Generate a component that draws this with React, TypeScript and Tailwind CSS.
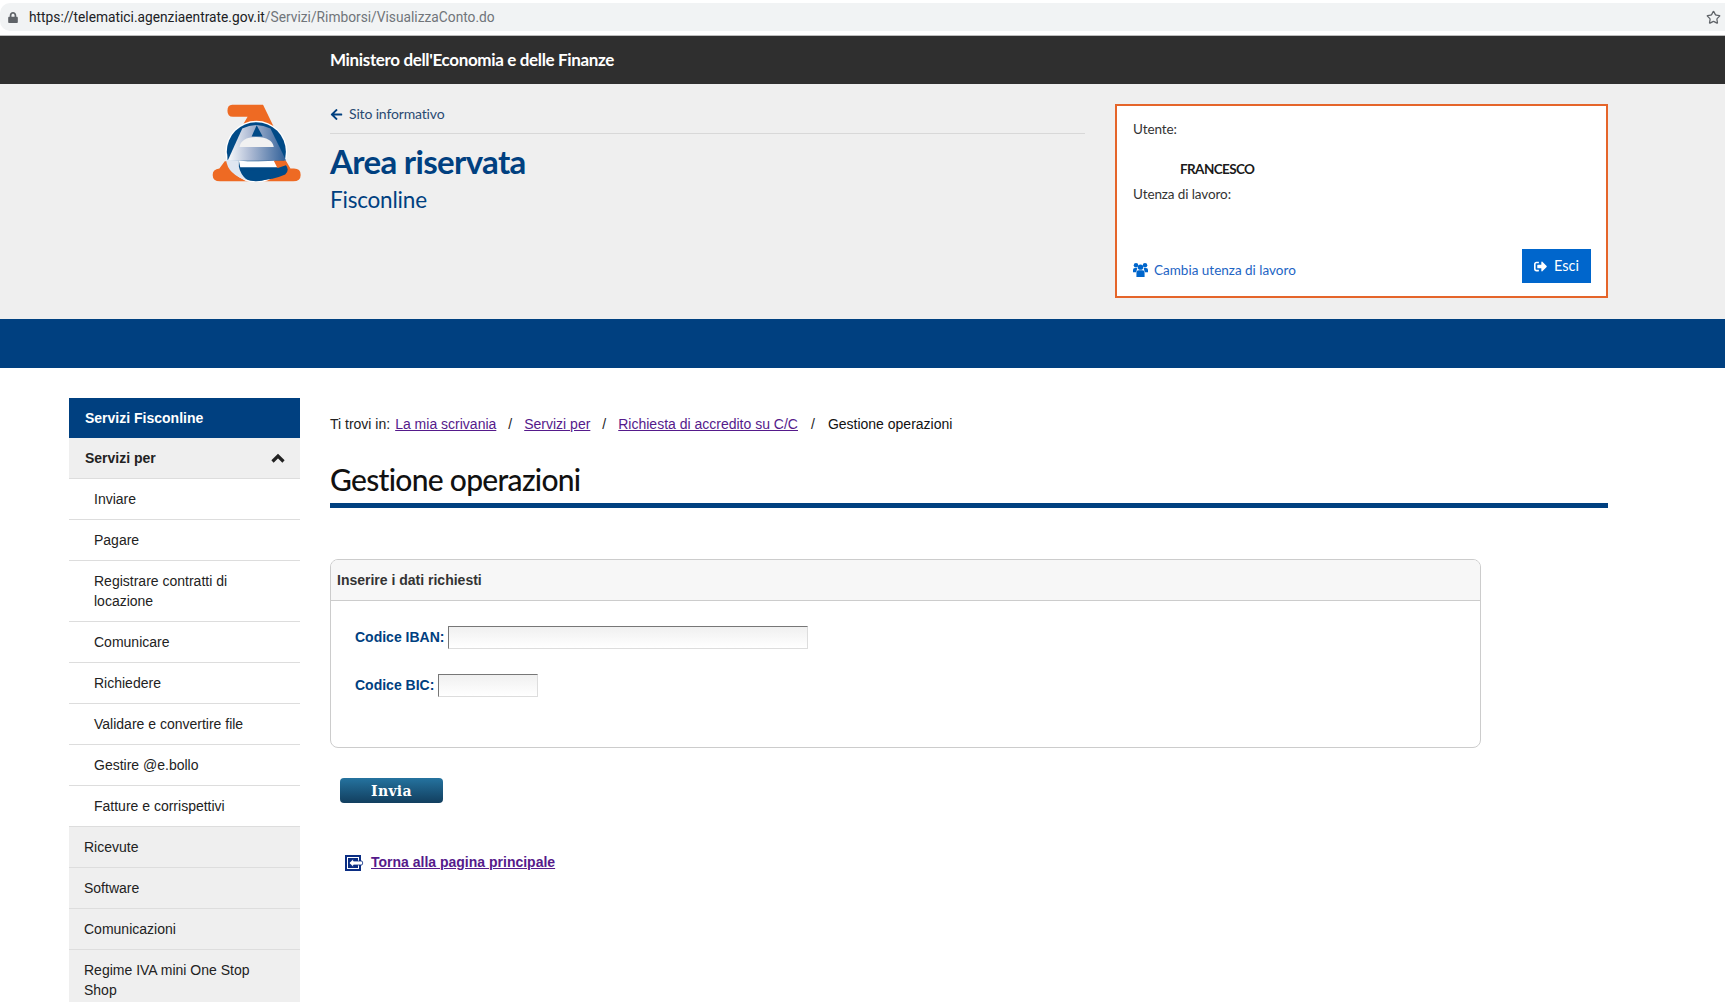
import React from 'react';
import { FaArrowLeft, FaLock, FaSignOutAlt } from 'react-icons/fa';
import { Star } from 'lucide-react';

const subItems = [
  'Inviare',
  'Pagare',
  'Registrare contratti di locazione',
  'Comunicare',
  'Richiedere',
  'Validare e convertire file',
  'Gestire @e.bollo',
  'Fatture e corrispettivi',
];

const mainItems = ['Ricevute', 'Software', 'Comunicazioni', 'Regime IVA mini One Stop Shop'];

const Logo = () => (
  <svg viewBox="66 40 268 232" className="w-[90px] h-[78px]">
    <defs>
      <linearGradient id="band" x1="0" x2="1" y1="0" y2="0">
        <stop offset="0" stopColor="#ffffff" />
        <stop offset="0.4" stopColor="#aebbd4" />
        <stop offset="1" stopColor="#2f5f98" />
      </linearGradient>
    </defs>
    <path d="M126 42H218L252 112H152L172 78H128Q112 78 112 60Q112 42 126 42Z" fill="#ee6a23" />
    <path d="M104 210L88 232Q68 234 68 251Q68 270 90 270H308Q330 270 330 251Q330 232 310 232H298L284 208Z" fill="#ee6a23" />
    <circle cx="198" cy="182" r="92" fill="#ffffff" />
    <circle cx="198" cy="182" r="88" fill="#004a87" />
    <path d="M156 113Q198 92 240 113L287 209H108Q112 175 156 113Z" fill="url(#band)" />
    <path d="M156 113L112 210Q108 150 156 113Z" fill="#004a87" />
    <path d="M199 103L217 137H184Z" fill="#004a87" />
    <path d="M148 168Q152 139 198 138Q245 139 250 168Z" fill="#f1f1f1" />
    <path d="M146 208Q160 212 252 209L262 228H150Z" fill="#ffffff" />
    <path d="M250 209H286L300 233H262Z" fill="#ee6a23" />
    <path d="M108 206Q112 250 172 268Q150 250 146 226L146 208Z" fill="#dfe6f1" />
    <path d="M172 236Q230 244 286 222Q298 236 284 250Q230 274 174 264Q184 250 172 236Z" fill="#004a87" />
  </svg>
);

const BackIcon = () => (
  <svg viewBox="0 0 19 16" className="w-[19px] h-[16px]">
    <rect x="1" y="1" width="14" height="14" fill="#ffffff" stroke="#0b2e84" strokeWidth="2" />
    <rect x="3" y="3" width="10" height="10" fill="#0b2e84" />
    <path d="M4 8L8.5 3.8V6H17Q18.5 8 17 10H8.5V12.2Z" fill="#ffffff" stroke="#0b2e84" strokeWidth="0.8" />
  </svg>
);

const UsersIcon = () => (
  <svg viewBox="0 0 14 14" className="w-[15px] h-[15px]" fill="#0066cc">
    <circle cx="2.8" cy="3" r="2.1" />
    <circle cx="11.2" cy="3" r="2.1" />
    <path d="M0 9.5V7.2Q0 5.6 1.8 5.6H4L3 9.5Z" />
    <path d="M14 9.5V7.2Q14 5.6 12.2 5.6H10L11 9.5Z" />
    <circle cx="7" cy="4.8" r="2.5" />
    <path d="M3.2 14V10Q3.2 7.8 5.4 7.8H8.6Q10.8 7.8 10.8 10V14Z" />
  </svg>
);

const ChevronUp = () => (
  <svg viewBox="0 0 14 10" className="w-[14px] h-[10px]" fill="none" stroke="#222" strokeWidth="3.2">
    <path d="M1.5 8.5L7 3L12.5 8.5" />
  </svg>
);

const App = () => {
  return (
    <div className="w-[1725px] h-[1002px] overflow-hidden bg-white font-['Liberation_Sans',sans-serif]">
      {/* browser bar */}
      <div className="h-[36px] pt-[3px] border-b border-[#bdbdbd] bg-white">
        <div className="h-[28px] bg-[#f1f3f4] rounded-l-[10px] flex items-center pl-[8px] pr-[4px] font-['Roboto',sans-serif] text-[13.75px]">
          <FaLock className="w-[10px] h-[11px] text-[#5f6368]" />
          <span className="ml-[11px] text-[#202124]">https://telematici.agenziaentrate.gov.it</span>
          <span className="text-[#70757a]">/Servizi/Rimborsi/VisualizzaConto.do</span>
          <Star className="ml-auto w-[15px] h-[15px] text-[#5f6368]" strokeWidth={2} />
        </div>
      </div>

      {/* dark ministry bar */}
      <div className="h-[48px] bg-[#2f2f2f] pl-[330px] flex items-center font-['Lato',sans-serif] text-[17px] font-bold text-white tracking-[-0.35px]">
        Ministero dell'Economia e delle Finanze
      </div>

      {/* header */}
      <div className="h-[235px] bg-[#efefef] flex font-['Lato',sans-serif]">
        <div className="w-[330px] pl-[212px] pt-[20px] shrink-0">
          <Logo />
        </div>
        <div className="w-[755px] pt-[20px]">
          <div className="h-[30px] border-b border-[#d8d8d8] flex items-start gap-[6px] text-[14px] leading-[20px] tracking-[-0.15px] text-[#2a4a72]">
            <FaArrowLeft className="w-[13px] h-[13px] mt-[4px] text-[#004080]" />
            Sito informativo
          </div>
          <div className="mt-[7px] text-[33px] leading-[40px] font-bold tracking-[-0.65px] text-[#004080]">Area riservata</div>
          <div className="mt-[4px] text-[22.5px] leading-[30px] tracking-[-0.2px] text-[#004080]">Fisconline</div>
        </div>
        <div className="ml-[30px] mt-[20px] w-[493px] h-[194px] border-[2px] border-[#e5652a] bg-white pl-[16px] pr-[15px] pt-[13px] flex flex-col text-[13.5px] text-[#333]">
          <div className="leading-[20px] tracking-[-0.1px]">Utente:</div>
          <div className="mt-[20px] ml-[47px] leading-[20px] font-bold tracking-[-0.6px] text-[#1a1a1a]">FRANCESCO</div>
          <div className="mt-[5px] leading-[20px] tracking-[-0.1px]">Utenza di lavoro:</div>
          <div className="mt-auto mb-[13px] flex items-end justify-between">
            <div className="flex items-center gap-[6px] pb-[3px] text-[#1d64c4]">
              <UsersIcon />
              Cambia utenza di lavoro
            </div>
            <div className="w-[69px] h-[34px] bg-[#0066cc] text-white text-[14.5px] flex items-center justify-center gap-[7px]">
              <FaSignOutAlt className="w-[13px] h-[13px]" />
              Esci
            </div>
          </div>
        </div>
      </div>

      <div className="h-[49px] bg-[#004080]" />

      {/* body */}
      <div className="flex pt-[30px] pl-[69px]">
        <nav className="w-[231px] shrink-0 text-[14px] leading-[20px] text-[#222]">
          <div className="h-[40px] bg-[#004080] text-white font-bold pl-[16px] flex items-center">Servizi Fisconline</div>
          <div className="h-[41px] bg-[#efefef] border-b border-[#ddd] font-bold pl-[16px] pr-[15px] flex items-center justify-between">
            Servizi per
            <ChevronUp />
          </div>
          {subItems.map((item) => (
            <div key={item} className="border-b border-[#ddd] pl-[25px] pr-[40px] py-[10px]">
              {item}
            </div>
          ))}
          {mainItems.map((item) => (
            <div key={item} className="bg-[#efefef] border-b border-[#ddd] pl-[15px] pr-[30px] py-[10px]">
              {item}
            </div>
          ))}
        </nav>

        <main className="ml-[30px] w-[1278px]">
          <div className="mt-[16px] text-[14px] leading-[20px] text-[#222] flex">
            Ti trovi in:
            <a className="ml-[5px] underline text-[#551a8b]">La mia scrivania</a>
            <span className="mx-[12px]">/</span>
            <a className="underline text-[#551a8b]">Servizi per</a>
            <span className="mx-[12px]">/</span>
            <a className="underline text-[#551a8b]">Richiesta di accredito su C/C</a>
            <span className="mx-[13px]">/</span>
            <span className="text-[#111]">Gestione operazioni</span>
          </div>
          <h1 className="mt-[27px] h-[42px] border-b-[5px] border-[#004080] font-['Lato',sans-serif] text-[30px] leading-[36px] font-medium tracking-[-0.7px] text-[#111] box-content">
            Gestione operazioni
          </h1>

          <div className="mt-[51px] w-[1151px] h-[189px] border border-[#ccc] rounded-[8px] overflow-hidden">
            <div className="h-[41px] bg-[#f7f7f7] border-b border-[#ccc] pl-[6px] flex items-center text-[14px] font-bold text-[#333]">
              Inserire i dati richiesti
            </div>
            <div className="pl-[24px] pt-[24px] text-[14px] font-bold text-[#004080]">
              <div className="flex items-center h-[24px] gap-[4px]">
                Codice IBAN:
                <div className="w-[360px] h-[23px] border border-[#ddd] border-t-[#777] border-l-[#777] bg-gradient-to-b from-[#f0f0f0] to-white" />
              </div>
              <div className="flex items-center h-[24px] mt-[24px] gap-[4px]">
                Codice BIC:
                <div className="w-[100px] h-[23px] border border-[#ddd] border-t-[#777] border-l-[#777] bg-gradient-to-b from-[#f0f0f0] to-white" />
              </div>
            </div>
          </div>

          <div className="mt-[30px] ml-[10px] w-[103px] h-[25px] pt-[1px] rounded-[4px] bg-gradient-to-b from-[#25739f] to-[#123f5f] text-white font-['DejaVu_Serif',serif] font-bold text-[14px] tracking-[0.3px] flex items-center justify-center">
            Invia
          </div>

          <div className="mt-[49px] ml-[15px] flex items-center gap-[7px]">
            <BackIcon />
            <a className="text-[14px] font-bold underline text-[#551a8b]">Torna alla pagina principale</a>
          </div>
        </main>
      </div>
    </div>
  );
};

export default App;
